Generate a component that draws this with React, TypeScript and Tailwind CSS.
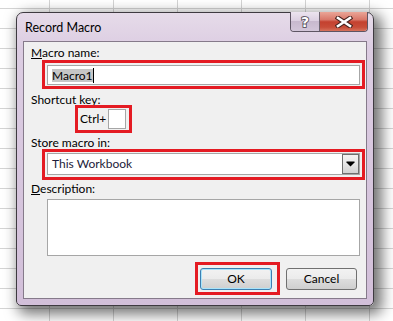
import React from "react";

const font = { fontFamily: "Lato, 'Liberation Sans', Arial, sans-serif" };

function Label({ children }: { children: React.ReactNode }) {
  return (
    <div className="h-[14px] leading-[14px] text-[12px] text-black pl-[7px] whitespace-nowrap">
      {children}
    </div>
  );
}

function RedBox({ className, children }: { className: string; children?: React.ReactNode }) {
  return <div className={"border-[3px] border-[#e41b23] " + className}>{children}</div>;
}

export default function App() {
  return (
    <div
      className="w-[393px] h-[321px] overflow-hidden bg-white pt-[12px] pl-[16px] bg-[linear-gradient(to_right,#d4d4d4_1px,transparent_1px),linear-gradient(to_bottom,#d4d4d4_1px,transparent_1px)] bg-[size:64px_20px] bg-[position:49px_8px]"
      style={font}
    >
      <div className="w-[358px] h-[294px] rounded-t-[7px] rounded-b-[5px] border border-[#3e3a40] bg-[linear-gradient(to_bottom,#e6dbe9_0%,#dccde2_12%,#d2bfd9_100%)] shadow-[5px_5px_14px_3px_rgba(0,0,0,0.55)] flex flex-col">
        {/* title bar */}
        <div className="h-[28px] flex items-start">
          <div className="pl-[8px] pt-[8px] text-[12.5px] leading-[14px] text-black whitespace-nowrap">Record Macro</div>
          <div className="flex-1" />
          <div className="flex -mt-[1px] mr-[5px] h-[20px] rounded-b-[4px] border border-t-0 border-[#5e5563] overflow-hidden">
            <div className="w-[29px] h-full flex items-center justify-center border-r border-[#6d6470] bg-[linear-gradient(to_bottom,#ece4ef_0%,#dcd0e1_45%,#c8b9ce_50%,#d3c6d9_100%)]">
              <svg width="12" height="16" viewBox="0 0 12 16">
                <text
                  x="6"
                  y="13"
                  textAnchor="middle"
                  fontSize="14"
                  fontWeight="bold"
                  fontFamily="'DejaVu Sans', sans-serif"
                  fill="#ffffff"
                  stroke="#4a4450"
                  strokeWidth="1.6"
                  paintOrder="stroke"
                >
                  ?
                </text>
              </svg>
            </div>
            <div className="w-[47px] h-full flex items-center justify-center bg-[linear-gradient(to_bottom,#eaa597_0%,#d9786a_40%,#c4412f_52%,#c84d39_80%,#d6725c_100%)]">
              <svg width="18" height="12" viewBox="0 0 18 12">
                <path d="M3 2 L15 10 M15 2 L3 10" stroke="#4a2420" strokeWidth="4.6" strokeLinecap="square" />
                <path d="M3 2 L15 10 M15 2 L3 10" stroke="#ffffff" strokeWidth="2.6" strokeLinecap="square" />
              </svg>
            </div>
          </div>
        </div>

        {/* client area */}
        <div className="mx-[6px] h-[258px] border border-[#857a8a] bg-[#f0f0f0] flex flex-col">
          <div className="mt-[4px]">
            <Label>
              <span className="underline">M</span>acro name:
            </Label>
          </div>
          <RedBox className="ml-[18px] w-[323px] h-[29px] pl-[2px] pt-[2px]">
            <div className="w-[313px] h-[20px] border border-[#a6a6a6] bg-white flex items-center pl-[4px]">
              <span className="bg-[#c6c6c6] text-[12px] leading-[13px] text-black">Macro1</span>
              <span className="w-px h-[15px] bg-black" />
            </div>
          </RedBox>

          <div className="mt-[4px]">
            <Label>Shortcut key:</Label>
          </div>
          <RedBox className="-mt-[2px] ml-[51px] w-[57px] h-[28px] flex items-center pl-[2px]">
            <span className="text-[12px] leading-[14px] text-black">Ctrl+</span>
            <div className="ml-[2px] w-[18px] h-[20px] border border-[#a6a6a6] bg-white" />
          </RedBox>

          <div className="mt-[3px]">
            <Label>Store macro in:</Label>
          </div>
          <RedBox className="-mt-[1px] ml-[18px] w-[323px] h-[31px] pl-[2px] pt-[1px]">
            <div className="w-[313px] h-[22px] border border-[#a6a6a6] bg-white flex items-center">
              <span className="flex-1 pl-[4px] text-[12px] leading-[14px] text-[#1c1c3a]">This Workbook</span>
              <div className="w-[17px] h-[20px] border border-[#6f6f6f] bg-[linear-gradient(to_bottom,#f4f4f4_0%,#e6e6e6_50%,#d2d2d2_100%)] flex items-center justify-center">
                <svg width="9" height="6" viewBox="0 0 9 6">
                  <path d="M0.5 0.5 H8.5 V1.5 L4.5 5.5 L0.5 1.5 Z" fill="#000000" />
                </svg>
              </div>
            </div>
          </RedBox>

          <div className="mt-[2px]">
            <Label>
              <span className="underline">D</span>escription:
            </Label>
          </div>
          <div className="mt-[3px] ml-[23px] w-[313px] h-[57px] border border-[#a6a6a6] bg-white" />

          <div className="mt-[6px] flex justify-end items-start pr-[9px]">
            <RedBox className="w-[85px] h-[33px] pl-[1px] pt-[0px] flex items-center">
              <div className="ml-[1px] w-[72px] h-[22px] rounded-[3px] border border-[#3c7fb1] shadow-[inset_0_0_0_1px_#a8e4fb] bg-[linear-gradient(to_bottom,#f2f2f2_0%,#ebebeb_50%,#dddddd_51%,#cfcfcf_100%)] flex items-center justify-center text-[12px] text-black">
                OK
              </div>
            </RedBox>
            <div className="ml-[6px] mt-[6px] w-[71px] h-[22px] rounded-[3px] border border-[#707070] bg-[linear-gradient(to_bottom,#f2f2f2_0%,#ebebeb_50%,#dddddd_51%,#cfcfcf_100%)] flex items-center justify-center text-[12px] text-black">
              Cancel
            </div>
          </div>
        </div>
      </div>
    </div>
  );
}
